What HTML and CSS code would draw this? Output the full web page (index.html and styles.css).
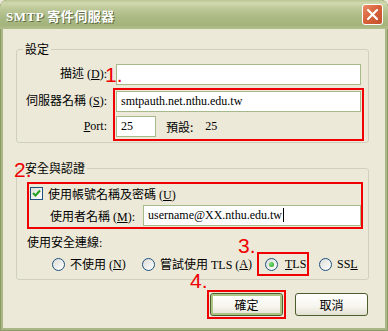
FILE: index.html
```html
<!DOCTYPE html>
<html lang="zh-Hant">
<head>
  <meta charset="UTF-8">
  <title>SMTP 寄件伺服器</title>
  <link rel="stylesheet" href="styles.css">
</head>
<body>
  <div class="window">
    <div class="titlebar">
      <span class="title">SMTP 寄件伺服器</span>
      <span class="close">
        <svg width="11" height="11" viewBox="0 0 11 11"><path d="M1 1 L10 10 M10 1 L1 10" stroke="#fff" stroke-width="2.2" stroke-linecap="square"/></svg>
      </span>
    </div>

    <div class="client">
      <fieldset class="group group-settings">
        <legend>設定</legend>
        <div class="group-body">
          <div class="row row-desc">
            <label class="lbl lbl-desc">描述 (<u>D</u>):</label>
            <div class="edit edit-long"></div>
          </div>
          <div class="row row-server">
            <div class="lbl-col">
              <label class="lbl">伺服器名稱 (<u>S</u>):</label>
              <label class="lbl"><u>P</u>ort:</label>
            </div>
            <div class="mark mark-server">
              <div class="edit edit-long">smtpauth.net.nthu.edu.tw</div>
              <div class="port-row">
                <div class="edit edit-port">25</div>
                <span class="default-lbl">預設:</span>
                <span>25</span>
              </div>
            </div>
          </div>
        </div>
      </fieldset>

      <fieldset class="group group-security">
        <legend>安全與認證</legend>
        <div class="group-body">
          <div class="mark mark-auth">
            <div class="check-row">
              <span class="checkbox">
                <svg width="11" height="11" viewBox="0 0 11 11"><path d="M2 5 L4.5 7.5 L9 2.5" fill="none" stroke="#21a121" stroke-width="2"/></svg>
              </span>
              <span class="check-lbl">使用帳號名稱及密碼 (<u>U</u>)</span>
            </div>
            <div class="user-row">
              <label class="lbl-user">使用者名稱 (<u>M</u>):</label>
              <div class="edit edit-user">username@XX.nthu.edu.tw<span class="caret"></span></div>
            </div>
          </div>

          <div class="secure-lbl">使用安全連線:</div>
          <div class="radio-row">
            <span class="opt opt-none"><span class="radio"></span>不使用 (<u>N</u>)</span>
            <span class="opt opt-try"><span class="radio"></span>嘗試使用 TLS (<u>A</u>)</span>
            <span class="mark mark-tls"><span class="radio on"></span><span><u>T</u>LS</span></span>
            <span class="opt opt-ssl"><span class="radio"></span>SS<u>L</u></span>
          </div>
        </div>
      </fieldset>

      <div class="buttons">
        <span class="mark mark-ok"><button class="btn btn-default">確定</button></span>
        <button class="btn btn-cancel">取消</button>
      </div>
    </div>

    <span class="note note-1">1.</span>
    <span class="note note-2">2.</span>
    <span class="note note-3">3.</span>
    <span class="note note-4">4.</span>
  </div>
</body>
</html>
```

FILE: styles.css
```css
body {
  margin: 0;
  font-family: "Liberation Serif", "Noto Sans CJK TC", serif;
  font-size: 12px;
  color: #000;
  background: #ece9d8;
}
.window {
  position: relative;
  width: 388px;
  height: 331px;
  box-sizing: border-box;
  background: #a9b784;
  border-radius: 7px 7px 0 0;
  box-shadow: inset 1px 0 0 #8c9a6a, inset -1px 0 0 #8c9a6a, inset 0 -1px 0 #8c9a6a;
  overflow: hidden;
}
.titlebar {
  height: 29px;
  box-sizing: border-box;
  display: flex;
  align-items: center;
  justify-content: space-between;
  padding: 2px 5px 0 6px;
  background: linear-gradient(to bottom, #b9c592 0, #d0d9ae 3px, #bcc897 9px, #aab983 18px, #a4b47c 25px, #b2bf8c 29px);
  border-radius: 7px 7px 0 0;
}
.title {
  font-family: "Liberation Serif", "Noto Sans CJK TC", serif;
  font-weight: bold;
  font-size: 13px;
  color: #fff;
  text-shadow: 1px 1px 0 #5d6b3e;
  letter-spacing: 0.5px;
}
.close {
  width: 21px;
  height: 21px;
  box-sizing: border-box;
  margin-top: -2px;
  border: 1px solid #fff;
  border-radius: 3px;
  background: linear-gradient(135deg, #e98d67 0%, #d9643c 45%, #c2502b 100%);
  display: flex;
  align-items: center;
  justify-content: center;
}
.client {
  margin: 0 3px;
  height: 299px;
  background: #ece9d8;
  padding-top: 13px;
  box-sizing: border-box;
}

/* group boxes */
.group {
  margin: 0 16px 0 13px;
  padding: 0;
  border: 1px solid #d0d0bf;
  border-radius: 3px;
  min-width: 0;
}
.group legend {
  margin-left: 6px;
  padding: 0 2px;
  line-height: 14px;
  font-family: "Noto Sans CJK TC", sans-serif;
}
.group-security {
  margin-top: 18px;
}
.group-settings .group-body {
  padding: 8px 0 1px 0;
}
.group-security .group-body {
  padding: 7px 0 3px 0;
}

.row {
  display: flex;
  align-items: flex-start;
}
.row-desc {
  align-items: center;
}
.row-server {
  margin-top: 3px;
}
.lbl {
  display: block;
  text-align: right;
  line-height: 21px;
  height: 21px;
  white-space: nowrap;
}
.lbl-desc {
  width: 90px;
  padding-right: 9px;
}
.lbl-col {
  width: 90px;
  padding: 3px 6px 0 0;
  display: flex;
  flex-direction: column;
  gap: 4px;
}

/* text boxes */
.edit {
  height: 21px;
  box-sizing: border-box;
  border: 1px solid #a5b98a;
  background: #fff;
  padding: 0 4px;
  line-height: 19px;
  white-space: nowrap;
  overflow: hidden;
}
.edit-long {
  width: 245px;
}
.edit-port {
  width: 40px;
}
.edit-user {
  width: 218px;
  margin-left: auto;
}
.caret {
  display: inline-block;
  width: 1px;
  height: 14px;
  background: #000;
  vertical-align: -3px;
  margin-left: 1px;
}
.port-row {
  display: flex;
  align-items: center;
  margin-top: 4px;
}
.default-lbl {
  margin: 0 12px 0 10px;
  font-family: "Noto Sans CJK TC", sans-serif;
}

/* red annotation boxes */
.mark {
  border: 2px solid #f00000;
}
.mark-server {
  padding: 1px 1px 2px 1px;
}
.mark-auth {
  margin-left: 10px;
  width: 336px;
  box-sizing: border-box;
  padding: 3px 0 1px 1px;
}
.check-row {
  display: flex;
  align-items: center;
  height: 13px;
}
.check-lbl {
  margin-left: 5px;
}
.user-row {
  display: flex;
  align-items: center;
  margin-top: 5px;
}
.lbl-user {
  margin-left: 20px;
}
.checkbox {
  width: 13px;
  height: 13px;
  box-sizing: border-box;
  border: 1px solid #1c5180;
  background: linear-gradient(135deg, #dcdcd7, #fff);
  display: flex;
  align-items: center;
  justify-content: center;
}

.secure-lbl {
  margin: 7px 0 0 10px;
  line-height: 14px;
}
.radio-row {
  display: flex;
  align-items: center;
  height: 24px;
  margin-top: 2px;
}
.opt {
  display: flex;
  align-items: center;
  white-space: nowrap;
}
.opt-none {
  margin-left: 35px;
  width: 90px;
}
.opt-try {
  width: 115px;
}
.opt-ssl {
  margin-left: 10px;
}
.mark-tls {
  width: 52px;
  height: 24px;
  box-sizing: border-box;
  padding-left: 6px;
  display: flex;
  align-items: center;
}
.radio {
  width: 13px;
  height: 13px;
  box-sizing: border-box;
  border: 1px solid #1c5180;
  border-radius: 50%;
  background: linear-gradient(135deg, #dcdcd7, #fff);
  margin-right: 5px;
  flex: none;
  display: flex;
  align-items: center;
  justify-content: center;
}
.radio.on {
  margin-right: 7px;
}
.radio.on::after {
  content: "";
  width: 5px;
  height: 5px;
  border-radius: 50%;
  background: radial-gradient(circle at 35% 35%, #7be07b, #21a121);
}

/* buttons */
.buttons {
  display: flex;
  justify-content: flex-end;
  align-items: center;
  margin-top: 10px;
  padding-right: 17px;
}
.mark-ok {
  padding: 1px;
  display: flex;
}
.btn {
  width: 73px;
  height: 23px;
  box-sizing: border-box;
  border: 1px solid #4c5e2c;
  border-radius: 3px;
  background: linear-gradient(to bottom, #fff 0%, #f6f5ee 60%, #e3e0d2 100%);
  font-family: "Noto Sans CJK TC", sans-serif;
  font-size: 12px;
  padding: 0;
  color: #000;
}
.btn-default {
  box-shadow: inset 0 0 0 2px #aec585;
}
.btn-cancel {
  margin-left: 9px;
}

/* red numbers */
.note {
  position: absolute;
  font-family: "Liberation Sans", sans-serif;
  font-size: 21px;
  line-height: 21px;
  color: #f00000;
}
.note-1 { left: 105px; top: 64px; }
.note-2 { left: 14px; top: 159px; }
.note-3 { left: 238px; top: 235px; }
.note-4 { left: 190px; top: 270px; }
```
